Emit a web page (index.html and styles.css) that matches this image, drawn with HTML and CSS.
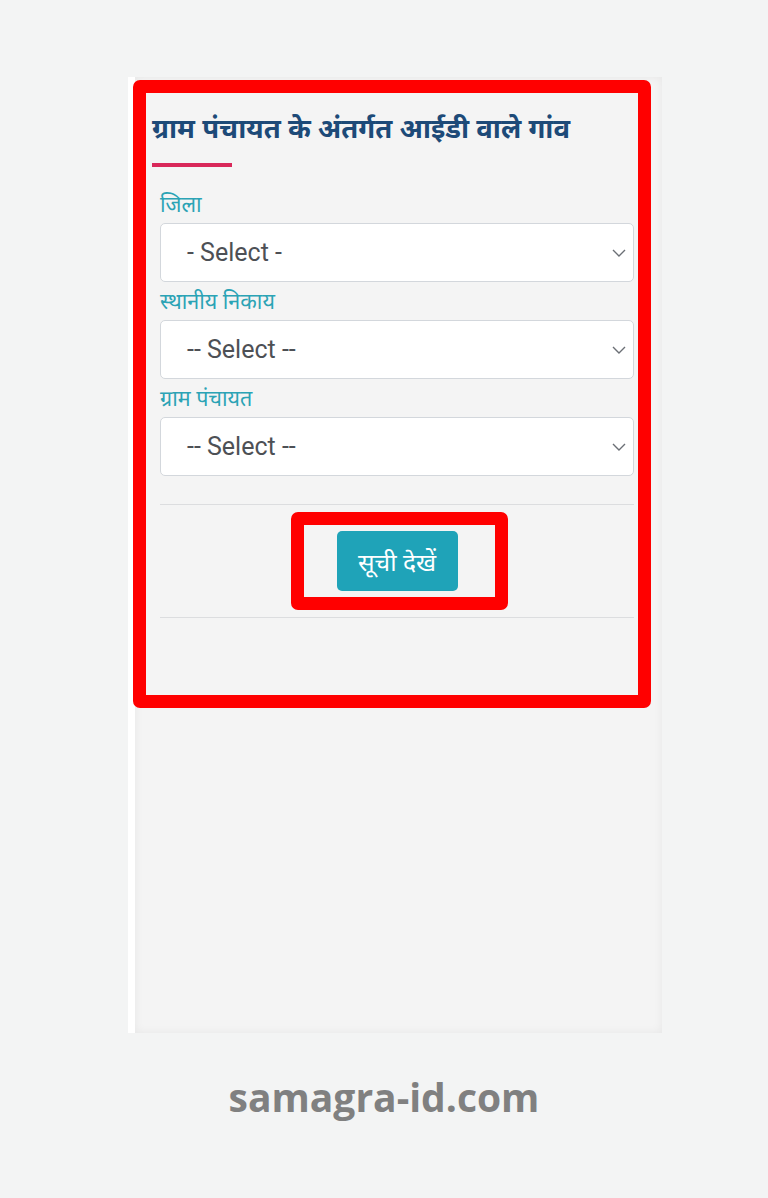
FILE: index.html
```html
<!DOCTYPE html>
<html lang="hi">
<head>
<meta charset="utf-8">
<title>ग्राम पंचायत के अंतर्गत आईडी वाले गांव</title>
<link rel="stylesheet" href="styles.css">
</head>
<body>
<div class="card">
  <div class="panel">
    <h2 class="title">ग्राम पंचायत के अंतर्गत आईडी वाले गांव</h2>
    <div class="title-bar"></div>
    <form class="form">
      <label class="label">जिला</label>
      <div class="select"><span>- Select -</span>
        <svg class="chev" viewBox="0 0 14 8" width="14" height="8"><path d="M1 1 L7 7 L13 1" fill="none" stroke="#6b6f75" stroke-width="1.4"/></svg>
      </div>
      <label class="label">स्थानीय निकाय</label>
      <div class="select"><span>-- Select --</span>
        <svg class="chev" viewBox="0 0 14 8" width="14" height="8"><path d="M1 1 L7 7 L13 1" fill="none" stroke="#6b6f75" stroke-width="1.4"/></svg>
      </div>
      <label class="label">ग्राम पंचायत</label>
      <div class="select"><span>-- Select --</span>
        <svg class="chev" viewBox="0 0 14 8" width="14" height="8"><path d="M1 1 L7 7 L13 1" fill="none" stroke="#6b6f75" stroke-width="1.4"/></svg>
      </div>
      <div class="actions">
        <button type="button" class="btn">सूची देखें</button>
      </div>
    </form>
  </div>
  <div class="mark mark-form"></div>
  <div class="mark mark-btn"></div>
</div>
<div class="footer">samagra-id.com</div>
</body>
</html>
```
FILE: styles.css
```css
html, body {
  margin: 0;
  padding: 0;
}
body {
  background: #f3f4f4;
  font-family: "Noto Sans", "Noto Sans Devanagari", sans-serif;
  width: 768px;
  height: 1198px;
  overflow: hidden;
}
.card {
  position: relative;
  margin: 77px 0 0 128px;
  width: 534px;
  height: 956px;
  background: #ffffff;
  padding-left: 7px;
  box-sizing: border-box;
}
.panel {
  height: 100%;
  background: #f4f4f4;
  box-shadow: inset 0 0 10px rgba(0, 0, 0, 0.06);
  padding: 0 28px 0 25px;
  box-sizing: border-box;
}
.title {
  margin: 0 0 0 -8px;
  padding-top: 32px;
  font-size: 27.5px;
  line-height: 38px;
  font-weight: 700;
  color: #1d4a78;
  white-space: nowrap;
}
.title-bar {
  margin: 16px 0 0 -8px;
  width: 80px;
  height: 4px;
  background: #d9285a;
}
.form {
  display: flex;
  flex-direction: column;
  margin-top: 24px;
}
.label {
  font-size: 21.5px;
  line-height: 26px;
  height: 26px;
  padding-bottom: 6px;
  color: #2ba3b5;
}
.select {
  height: 59px;
  background: #ffffff;
  border: 1px solid #d3d7dc;
  border-radius: 5px;
  box-sizing: border-box;
  display: flex;
  align-items: center;
  justify-content: space-between;
  padding: 0 7px 0 26px;
  font-family: Roboto, "Liberation Sans", sans-serif;
  font-size: 25px;
  color: #4d5055;
  margin-bottom: 6px;
}
.actions {
  margin-top: 22px;
  border-top: 1px solid #dcdddf;
  border-bottom: 1px solid #dcdddf;
  height: 112px;
  display: flex;
  justify-content: center;
  align-items: center;
}
.btn {
  width: 121px;
  height: 60px;
  border: none;
  border-radius: 5px;
  background: #1fa3b8;
  color: #ffffff;
  font-family: "Noto Sans", "Noto Sans Devanagari", sans-serif;
  font-size: 24.5px;
  padding: 0;
}
.mark {
  position: absolute;
  border: 13px solid #ff0000;
  border-radius: 7px;
  box-sizing: border-box;
}
.mark-form {
  left: 5px;
  top: 3px;
  width: 518px;
  height: 628px;
}
.mark-btn {
  left: 163px;
  top: 435px;
  width: 217px;
  height: 98px;
}
.footer {
  text-align: center;
  margin-top: 42px;
  font-family: "Open Sans", "DejaVu Sans", sans-serif;
  font-weight: 700;
  font-size: 39px;
  line-height: 44px;
  color: #808080;
}
```
